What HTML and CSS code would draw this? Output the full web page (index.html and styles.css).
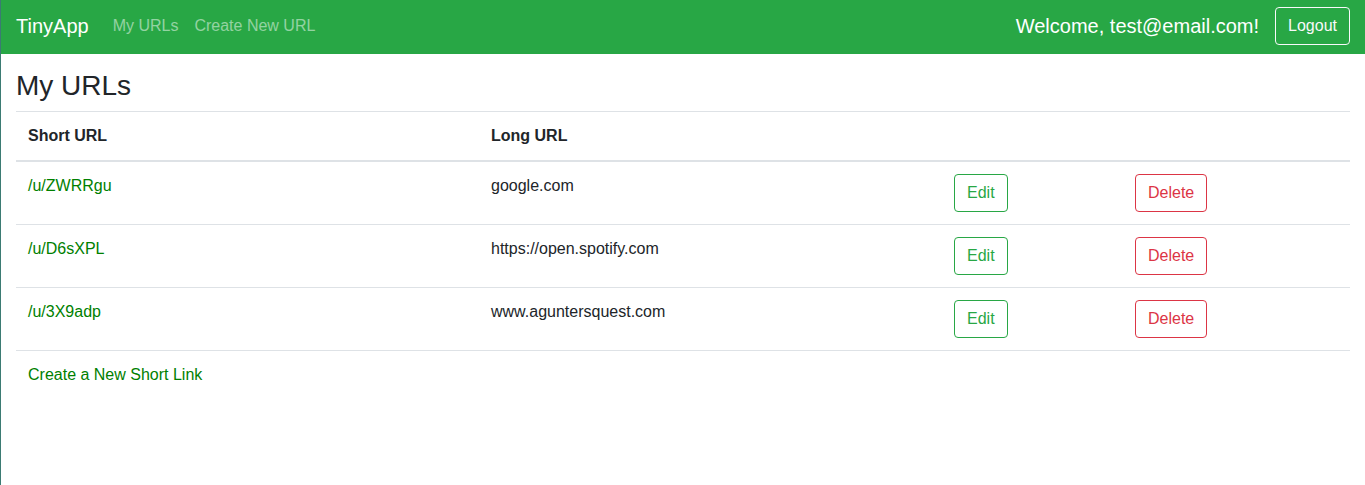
FILE: index.html
```html
<!DOCTYPE html>
<html lang="en">
<head>
<meta charset="utf-8">
<title>TinyApp</title>
<link rel="stylesheet" href="styles.css">
</head>
<body>
<nav class="navbar">
  <a class="brand" href="#">TinyApp</a>
  <ul class="nav-links">
    <li><a href="#">My URLs</a></li>
    <li><a href="#">Create New URL</a></li>
  </ul>
  <div class="nav-user">
    <span class="welcome">Welcome, test@email.com!</span>
    <button class="btn btn-light">Logout</button>
  </div>
</nav>
<main class="container">
  <h3 class="title">My URLs</h3>
  <table class="table">
    <colgroup>
      <col class="c-short"><col class="c-long"><col class="c-edit"><col class="c-del">
    </colgroup>
    <thead>
      <tr><th>Short URL</th><th>Long URL</th><th></th><th></th></tr>
    </thead>
    <tbody>
      <tr>
        <td><a href="#">/u/ZWRRgu</a></td>
        <td>google.com</td>
        <td><button class="btn btn-success">Edit</button></td>
        <td><button class="btn btn-danger">Delete</button></td>
      </tr>
      <tr>
        <td><a href="#">/u/D6sXPL</a></td>
        <td>https://open.spotify.com</td>
        <td><button class="btn btn-success">Edit</button></td>
        <td><button class="btn btn-danger">Delete</button></td>
      </tr>
      <tr>
        <td><a href="#">/u/3X9adp</a></td>
        <td>www.aguntersquest.com</td>
        <td><button class="btn btn-success">Edit</button></td>
        <td><button class="btn btn-danger">Delete</button></td>
      </tr>
      <tr>
        <td colspan="4"><a href="#">Create a New Short Link</a></td>
      </tr>
    </tbody>
  </table>
</main>
</body>
</html>
```
FILE: styles.css
```css
* { box-sizing: border-box; }
html, body { margin: 0; padding: 0; }
body {
  font-family: "Liberation Sans", Arial, sans-serif;
  font-size: 16px;
  line-height: 1.5;
  color: #212529;
  background: #fff;
  border-left: 1px solid #3b7b73;
  min-height: 100vh;
}
a { text-decoration: none; }

.navbar {
  display: flex;
  align-items: center;
  background: #28a745;
  padding: 7px 15px 9px 15px;
  height: 54px;
}
.brand {
  color: #fff;
  font-size: 20px;
  line-height: 30px;
  margin-right: 16px;
}
.nav-links {
  display: flex;
  list-style: none;
  margin: 0;
  padding: 0;
}
.nav-links a {
  display: block;
  padding: 8px;
  color: rgba(255, 255, 255, 0.5);
}
.nav-user {
  margin-left: auto;
  display: flex;
  align-items: center;
  gap: 16px;
}
.welcome {
  color: #fff;
  font-size: 20px;
  line-height: 30px;
}
.btn {
  font-family: inherit;
  font-size: 16px;
  line-height: 24px;
  padding: 6px 12px;
  border-radius: 4px;
  background: transparent;
  border: 1px solid;
  cursor: pointer;
  display: inline-block;
}
.btn-light { color: #f8f9fa; border-color: #f8f9fa; }
.btn-success { color: #28a745; border-color: #28a745; }
.btn-danger { color: #dc3545; border-color: #dc3545; }

.container {
  padding: 15px 15px 0;
}
.title {
  font-size: 28px;
  font-weight: 500;
  line-height: 1.2;
  margin: 0 0 8px;
}
.table {
  width: 100%;
  border-collapse: collapse;
  table-layout: fixed;
}
.c-short { width: 463px; }
.c-long { width: 463px; }
.c-edit { width: 181px; }
.table th, .table td {
  padding: 12px;
  text-align: left;
  vertical-align: top;
  border-top: 1px solid #dee2e6;
}
.table th { font-weight: bold; }
.table thead th {
  border-bottom: 2px solid #dee2e6;
}
.table td a { color: green; }
```
